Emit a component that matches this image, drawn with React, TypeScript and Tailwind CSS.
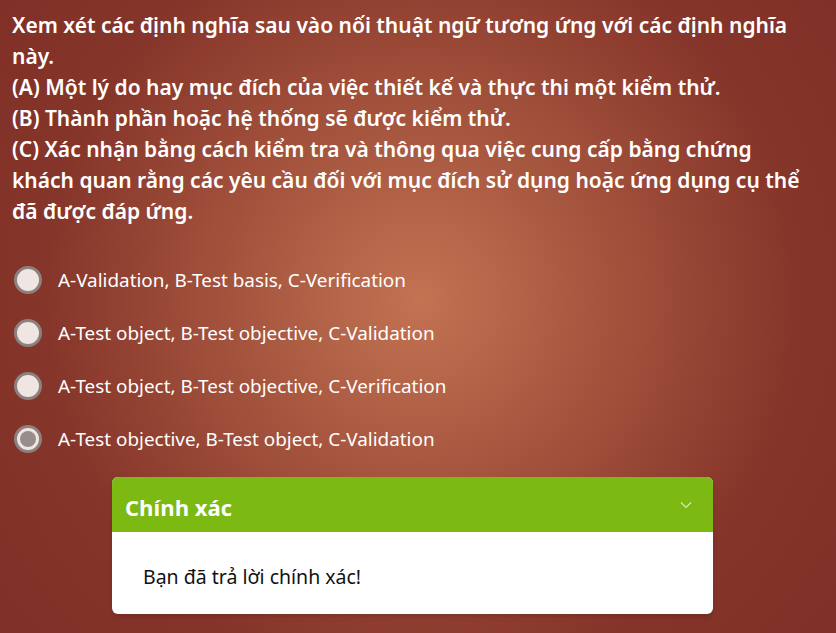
import { useState } from "react";

const options = [
  "A-Validation, B-Test basis, C-Verification",
  "A-Test object, B-Test objective, C-Validation",
  "A-Test object, B-Test objective, C-Verification",
  "A-Test objective, B-Test object, C-Validation",
];

export default function App() {
  const [selected, setSelected] = useState(3);

  return (
    <div
      className="min-h-[633px] w-full text-white bg-[radial-gradient(circle_at_420px_300px,#c37352_0%,#a4543d_35%,#86352a_70%,#7f2f26_100%)]"
      style={{ fontFamily: '"Noto Sans", "Open Sans", sans-serif' }}
    >
      <div className="pl-3 pr-1 pt-[10px]">
        <p className="text-[21px] font-semibold leading-[31px] whitespace-nowrap">
          Xem xét các định nghĩa sau vào nối thuật ngữ tương ứng với các định nghĩa
          <br />
          này.
          <br />
          (A) Một lý do hay mục đích của việc thiết kế và thực thi một kiểm thử.
          <br />
          (B) Thành phần hoặc hệ thống sẽ được kiểm thử.
          <br />
          (C) Xác nhận bằng cách kiểm tra và thông qua việc cung cấp bằng chứng
          <br />
          khách quan rằng các yêu cầu đối với mục đích sử dụng hoặc ứng dụng cụ thể
          <br />
          đã được đáp ứng.
        </p>
      </div>

      <div className="flex flex-col gap-[25px] pt-[39px] pl-[14px]">
        {options.map((opt, i) => (
          <label key={i} className="flex items-center gap-4 cursor-pointer h-[28px]" onClick={() => setSelected(i)}>
            <span className="w-[28px] h-[28px] rounded-full border-[3px] border-[#8c817f] bg-[#efe6e4] flex items-center justify-center shrink-0">
              {selected === i && <span className="w-[16px] h-[16px] rounded-full bg-[#978e8c]" />}
            </span>
            <span className="text-[18.9px]">{opt}</span>
          </label>
        ))}
      </div>

      <div className="ml-[112px] mt-[24px] w-[601px] rounded-md overflow-hidden bg-white shadow-md">
        <div className="h-[55px] bg-[#7db913] flex items-center justify-between pt-[5px] pl-[13px] pr-[20px]">
          <span className="text-[22px] font-bold" style={{ fontFamily: '"Open Sans", "Noto Sans", sans-serif' }}>
            Chính xác
          </span>
          <svg width="14" height="14" viewBox="0 0 14 14" fill="none" stroke="#d7eab0" strokeWidth="1.2" className="-mt-[5px]">
            <path d="M2 4.5l5 5 5-5" />
          </svg>
        </div>
        <div className="h-[82px] flex items-center pt-[8px] pl-[31px] text-[19.5px] text-[#111]">
          Bạn đã trả lời chính xác!
        </div>
      </div>
    </div>
  );
}
